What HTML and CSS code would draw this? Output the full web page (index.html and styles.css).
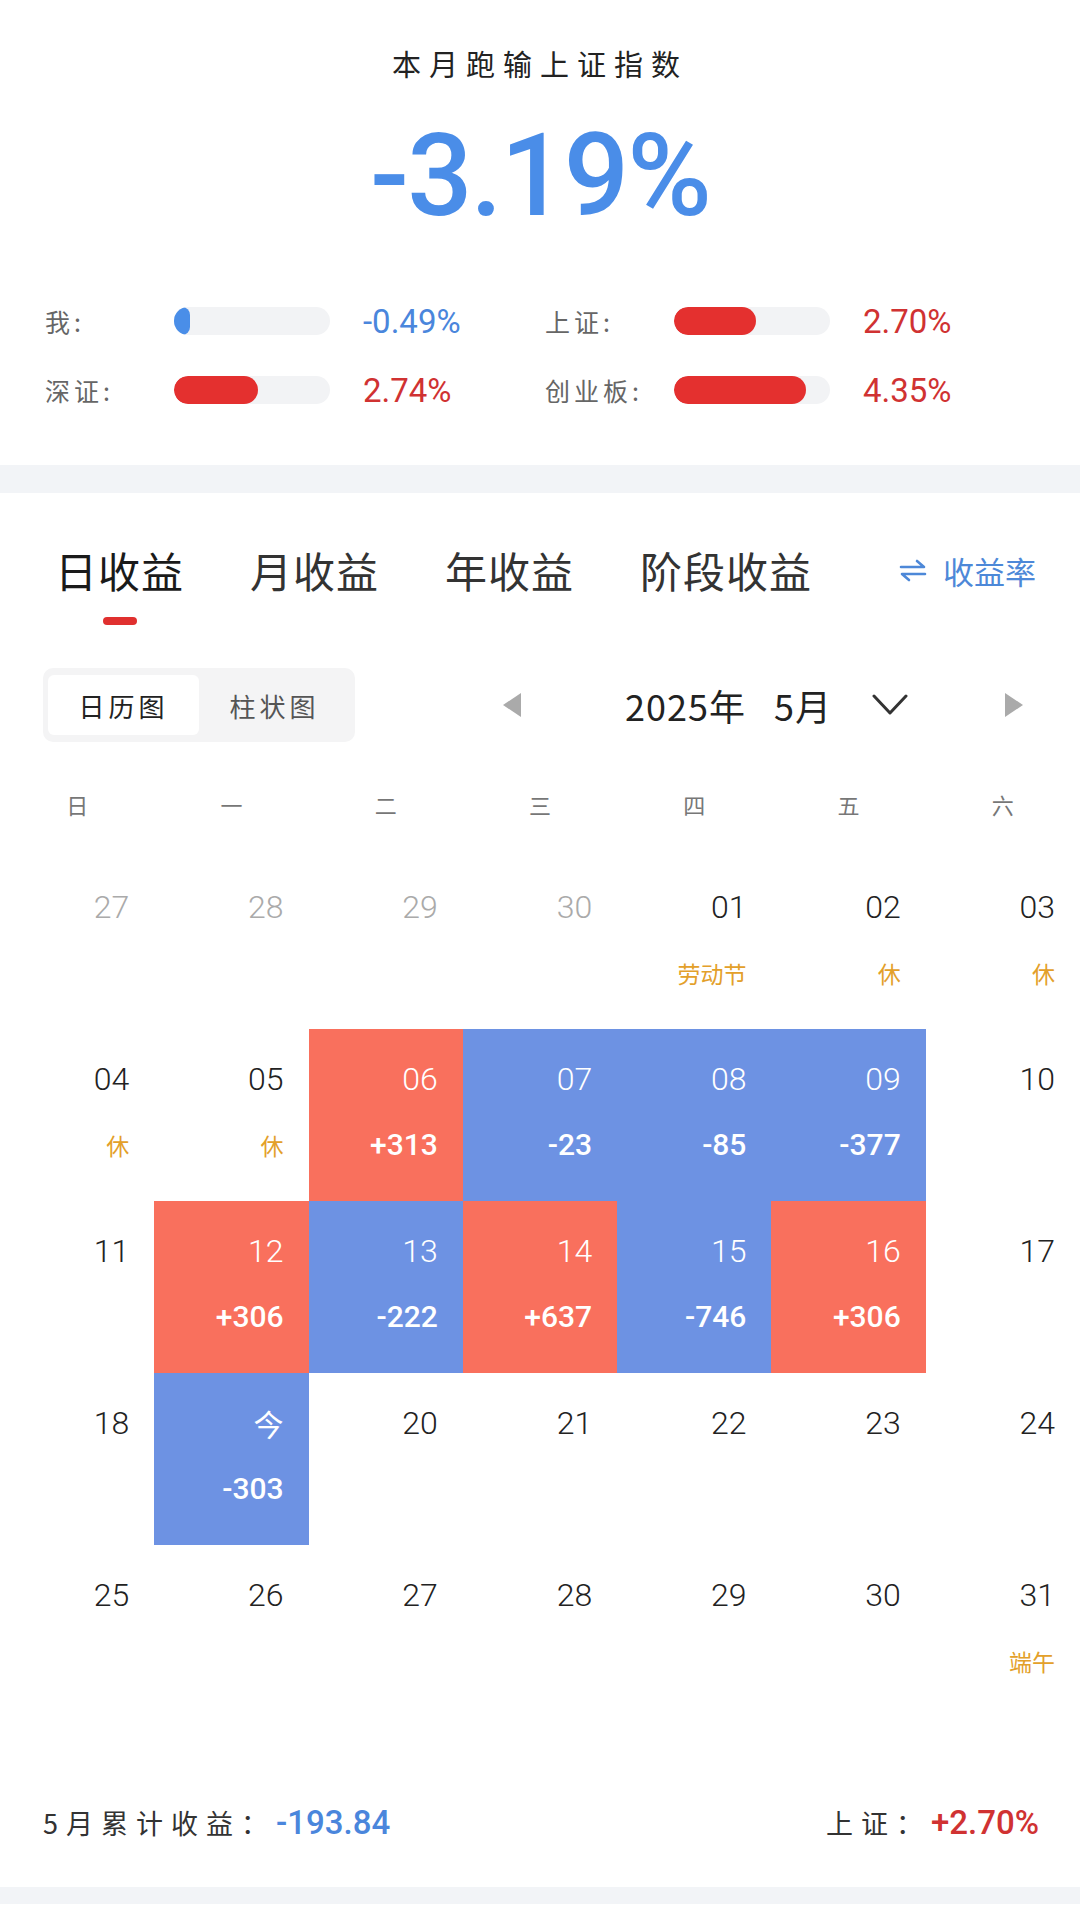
FILE: index.html
```html
<!DOCTYPE html>
<html lang="zh-CN">
<head>
<meta charset="utf-8">
<title>本月收益</title>
<link rel="stylesheet" href="styles.css">
</head>
<body>
<section class="summary">
  <h1 class="title">本月跑输上证指数</h1>
  <div class="big">-3.19%</div>
  <div class="stats">
    <div class="stat">
      <span class="stat-label">我:</span>
      <span class="track"><span class="fill fill-blue" style="width:16px"></span></span>
      <span class="stat-val blue">-0.49%</span>
    </div>
    <div class="stat">
      <span class="stat-label">上证:</span>
      <span class="track"><span class="fill fill-red" style="width:82px"></span></span>
      <span class="stat-val red">2.70%</span>
    </div>
    <div class="stat">
      <span class="stat-label">深证:</span>
      <span class="track"><span class="fill fill-red" style="width:84px"></span></span>
      <span class="stat-val red">2.74%</span>
    </div>
    <div class="stat">
      <span class="stat-label">创业板:</span>
      <span class="track"><span class="fill fill-red" style="width:132px"></span></span>
      <span class="stat-val red">4.35%</span>
    </div>
  </div>
</section>
<div class="band"></div>
<section class="panel">
  <nav class="tabs">
    <div class="tab active"><span class="tab-text">日收益</span><span class="indicator"></span></div>
    <div class="tab"><span class="tab-text">月收益</span></div>
    <div class="tab"><span class="tab-text">年收益</span></div>
    <div class="tab"><span class="tab-text">阶段收益</span></div>
    <div class="switch">
      <svg class="switch-icon" viewBox="0 0 28 24" width="28" height="24"><path d="M2 9 H25 L18 3" /><path d="M26 16 H3 L10 22" /></svg>
      <span>收益率</span>
    </div>
  </nav>
  <div class="toolbar">
    <div class="seg">
      <span class="seg-item on">日历图</span>
      <span class="seg-item">柱状图</span>
    </div>
    <span class="tri tri-left"></span>
    <div class="month"><span>2025年</span><span class="mnum">5月</span></div>
    <svg class="chev" viewBox="0 0 36 22" width="36" height="22"><polyline points="2,2 18,19 34,2" /></svg>
    <span class="tri tri-right"></span>
  </div>
  <div class="week">
    <span>日</span><span>一</span><span>二</span><span>三</span><span>四</span><span>五</span><span>六</span>
  </div>
  <div class="cal">
    <div class="cell prev"><span class="d">27</span></div>
    <div class="cell prev"><span class="d">28</span></div>
    <div class="cell prev"><span class="d">29</span></div>
    <div class="cell prev"><span class="d">30</span></div>
    <div class="cell"><span class="d">01</span><span class="hol">劳动节</span></div>
    <div class="cell"><span class="d">02</span><span class="hol">休</span></div>
    <div class="cell"><span class="d">03</span><span class="hol">休</span></div>

    <div class="cell"><span class="d">04</span><span class="hol">休</span></div>
    <div class="cell"><span class="d">05</span><span class="hol">休</span></div>
    <div class="cell up"><span class="d">06</span><span class="v">+313</span></div>
    <div class="cell down"><span class="d">07</span><span class="v">-23</span></div>
    <div class="cell down"><span class="d">08</span><span class="v">-85</span></div>
    <div class="cell down"><span class="d">09</span><span class="v">-377</span></div>
    <div class="cell"><span class="d">10</span></div>

    <div class="cell"><span class="d">11</span></div>
    <div class="cell up"><span class="d">12</span><span class="v">+306</span></div>
    <div class="cell down"><span class="d">13</span><span class="v">-222</span></div>
    <div class="cell up"><span class="d">14</span><span class="v">+637</span></div>
    <div class="cell down"><span class="d">15</span><span class="v">-746</span></div>
    <div class="cell up"><span class="d">16</span><span class="v">+306</span></div>
    <div class="cell"><span class="d">17</span></div>

    <div class="cell"><span class="d">18</span></div>
    <div class="cell down"><span class="d cj">今</span><span class="v">-303</span></div>
    <div class="cell"><span class="d">20</span></div>
    <div class="cell"><span class="d">21</span></div>
    <div class="cell"><span class="d">22</span></div>
    <div class="cell"><span class="d">23</span></div>
    <div class="cell"><span class="d">24</span></div>

    <div class="cell"><span class="d">25</span></div>
    <div class="cell"><span class="d">26</span></div>
    <div class="cell"><span class="d">27</span></div>
    <div class="cell"><span class="d">28</span></div>
    <div class="cell"><span class="d">29</span></div>
    <div class="cell"><span class="d">30</span></div>
    <div class="cell"><span class="d">31</span><span class="hol">端午</span></div>
  </div>
  <div class="foot">
    <div class="foot-left"><span class="foot-label">5月累计收益：</span><span class="foot-num blue">-193.84</span></div>
    <div class="foot-right"><span class="foot-label">上证：</span><span class="foot-num red">+2.70%</span></div>
  </div>
</section>
<div class="band band-bottom"></div>
</body>
</html>
```

FILE: styles.css
```css
* { box-sizing: border-box; }
html, body { margin: 0; padding: 0; }
body {
  width: 1080px;
  background: #ffffff;
  font-family: "Noto Sans CJK SC", "Noto Sans", Roboto, sans-serif;
  color: #222;
}

.summary {
  padding: 40px 0 47px;
}
.title {
  margin: 0;
  text-align: center;
  font-size: 29px;
  font-weight: 400;
  letter-spacing: 8px;
  line-height: 46px;
  color: #222;
}
.big {
  margin-top: 25px;
  text-align: center;
  font-family: Roboto, "Liberation Sans", sans-serif;
  font-weight: 500;
  font-size: 115px;
  line-height: 130px;
  letter-spacing: -2px;
  color: #4a8de8;
}
.stats {
  margin-top: 52px;
  padding-left: 45px;
  display: grid;
  grid-template-columns: 500px 500px;
  row-gap: 13px;
}
.stat {
  display: grid;
  grid-template-columns: 129px 156px auto;
  align-items: center;
  height: 56px;
}
.stat-label {
  font-size: 25px;
  color: #666;
  letter-spacing: 4px;
}
.track {
  display: block;
  height: 28px;
  border-radius: 14px;
  background: #f2f3f5;
  overflow: hidden;
}
.fill {
  display: block;
  height: 28px;
  border-radius: 14px;
}
.fill-blue { background: #4a8ee8; }
.fill-red { background: #e4302f; }
.stat-val {
  margin-left: 33px;
  font-family: Roboto, "Liberation Sans", sans-serif;
  font-size: 33px;
}
.blue { color: #4a86dc; }
.red { color: #d03232; }

.band {
  height: 28px;
  background: #f2f4f7;
}
.band-bottom { height: 17px; }

.panel {
  padding-top: 50px;
}
.tabs {
  display: flex;
  align-items: flex-start;
  padding: 0 44px 0 55px;
  gap: 66px;
}
.tab {
  display: flex;
  flex-direction: column;
  align-items: center;
}
.tab-text {
  font-size: 42px;
  line-height: 54px;
  letter-spacing: 1px;
  color: #333;
}
.tab.active .tab-text { color: #1a1a1a; }
.indicator {
  margin-top: 20px;
  width: 34px;
  height: 8px;
  border-radius: 4px;
  background: #e0302f;
}
.switch {
  margin-left: auto;
  display: flex;
  align-items: center;
  gap: 16px;
  height: 54px;
  font-size: 31px;
  color: #4d88d8;
}
.switch-icon {
  fill: none;
  stroke: #4d88d8;
  stroke-width: 2.6;
  stroke-linecap: round;
  stroke-linejoin: round;
}

.toolbar {
  margin-top: 43px;
  display: flex;
  align-items: center;
  padding-left: 43px;
  height: 74px;
}
.seg {
  display: flex;
  width: 312px;
  height: 74px;
  padding: 7px 5px;
  border-radius: 10px;
  background: #f4f4f5;
}
.seg-item {
  flex: 1;
  display: flex;
  align-items: center;
  justify-content: center;
  font-size: 26px;
  letter-spacing: 4px;
  color: #555;
  border-radius: 6px;
}
.seg-item.on {
  background: #fff;
  color: #222;
}
.tri {
  width: 0;
  height: 0;
  border-top: 12px solid transparent;
  border-bottom: 12px solid transparent;
}
.tri-left {
  margin-left: 148px;
  border-right: 18px solid #aaaaaa;
}
.tri-right {
  margin-left: 97px;
  border-left: 18px solid #aaaaaa;
}
.month {
  margin-left: 104px;
  font-size: 36px;
  letter-spacing: 1px;
  color: #222;
  display: flex;
  gap: 28px;
}
.chev {
  margin-left: 40px;
  fill: none;
  stroke: #333;
  stroke-width: 3;
  stroke-linecap: round;
  stroke-linejoin: round;
}

.week {
  margin-top: 42px;
  display: grid;
  grid-template-columns: repeat(7, 1fr);
  height: 40px;
  align-items: center;
  text-align: center;
  font-size: 22px;
  color: #777;
}

.cal {
  margin-top: 33px;
  display: grid;
  grid-template-columns: repeat(7, 1fr);
  grid-auto-rows: 172px;
}
.cell {
  display: flex;
  flex-direction: column;
  align-items: flex-end;
  padding: 30px 25px 0 0;
}
.d {
  font-family: Roboto, "Liberation Sans", sans-serif;
  font-weight: 300;
  font-size: 32px;
  line-height: 40px;
  color: #222;
}
.d.cj {
  font-family: "Noto Sans CJK SC", sans-serif;
  font-weight: 400;
  font-size: 30px;
}
.prev .d { color: #aaaaaa; }
.hol {
  margin-top: 26px;
  font-size: 23px;
  line-height: 40px;
  color: #e3a02a;
}
.v {
  margin-top: 26px;
  font-family: Roboto, "Liberation Sans", sans-serif;
  font-weight: 500;
  font-size: 30px;
  line-height: 40px;
  color: #fff;
}
.up { background: #f9705d; }
.down { background: #6d92e3; }
.up .d, .down .d { color: #fff; }

.foot {
  margin-top: 80px;
  padding: 0 41px 40px 43px;
  display: flex;
  justify-content: space-between;
  align-items: center;
  height: 90px;
}
.foot-left, .foot-right {
  display: flex;
  align-items: center;
  height: 50px;
}
.foot-label {
  font-size: 27px;
  color: #333;
  letter-spacing: 8px;
}
.foot-num {
  font-family: Roboto, "Liberation Sans", sans-serif;
  font-weight: 500;
  font-size: 33px;
}
```
